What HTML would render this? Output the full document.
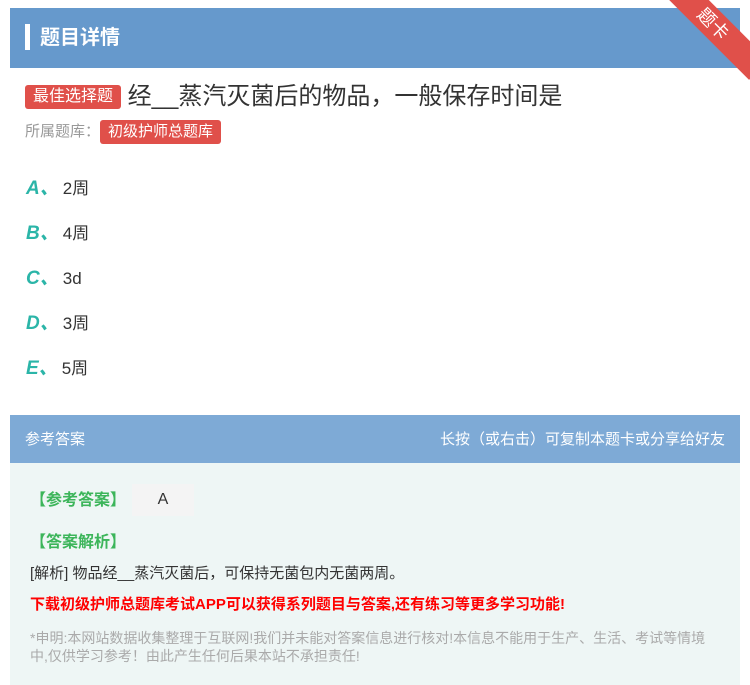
<!DOCTYPE html>
<html><head><meta charset="utf-8"><style>
body{margin:0;width:750px;height:685px;background:#fff;font-family:"Liberation Sans","Noto Sans CJK SC",sans-serif;position:relative;overflow:hidden}
.hd{position:absolute;left:10px;top:8px;width:730px;height:60px;background:#6699cc}
.hd .bar{position:absolute;left:15px;top:16px;width:5px;height:26px;background:#fff}
.hd .t{position:absolute;left:30px;top:13px;color:#fff;font-size:20px;font-weight:bold}
.rib{position:absolute;right:-28px;top:10px;width:130px;height:28px;background:#e0504a;transform:rotate(45deg);color:#fff;text-align:center;font-size:18px;line-height:28px;transform-origin:center}
.tag{display:inline-block;background:#e0504a;color:#fff;border-radius:3px;padding:0 8px}
.q{position:absolute;left:25px;top:76px;font-size:24px;color:#333}
.q .tag{font-size:16px;line-height:24px;vertical-align:3px}
.lib{position:absolute;left:25px;top:120px;font-size:15px;color:#999}
.lib .tag{font-size:15px;line-height:24px}
.opt{position:absolute;left:26px;font-size:17px;color:#333}
.opt b{color:#2bb5a8;font-style:italic;font-size:19px;margin-right:4px}
.ah{position:absolute;left:10px;top:415px;width:730px;height:48px;background:#7eaad6;color:#fff;font-size:15px}
.ab{position:absolute;left:10px;top:463px;width:730px;height:222px;background:#eef6f5}
.g{color:#3cb55a;font-size:16px;font-weight:bold}
</style></head><body>
<div class="hd"><div class="bar"></div><div class="t">题目详情</div></div>
<div class="rib">题卡</div>
<div class="q"><span class="tag">最佳选择题</span> 经__蒸汽灭菌后的物品，一般保存时间是</div>
<div class="lib">所属题库：<span class="tag">初级护师总题库</span></div>
<div class="opt" style="top:173px"><b>A、</b>2周</div>
<div class="opt" style="top:218px"><b>B、</b>4周</div>
<div class="opt" style="top:263px"><b>C、</b>3d</div>
<div class="opt" style="top:308px"><b>D、</b>3周</div>
<div class="opt" style="top:353px"><b>E、</b>5周</div>
<div class="ah"><span style="position:absolute;left:15px;top:13px">参考答案</span><span style="position:absolute;right:15px;top:13px">长按（或右击）可复制本题卡或分享给好友</span></div>
<div class="ab">
<div class="g" style="position:absolute;left:20px;top:23px">【参考答案】</div>
<div style="position:absolute;left:122px;top:21px;width:62px;height:32px;background:#f4f4f4;font-size:16px;text-align:center;line-height:32px;color:#333">A</div>
<div class="g" style="position:absolute;left:20px;top:65px">【答案解析】</div>
<div style="position:absolute;left:20px;top:99px;font-size:15px;color:#333">[解析] 物品经__蒸汽灭菌后，可保持无菌包内无菌两周。</div>
<div style="position:absolute;left:20px;top:130px;font-size:15px;color:#f00;font-weight:bold">下载初级护师总题库考试APP可以获得系列题目与答案,还有练习等更多学习功能!</div>
<div style="position:absolute;left:20px;top:166px;width:690px;font-size:14px;color:#aaa;line-height:18px">*申明:本网站数据收集整理于互联网!我们并未能对答案信息进行核对!本信息不能用于生产、生活、考试等情境中,仅供学习参考！由此产生任何后果本站不承担责任!</div>
</div>
</body></html>
